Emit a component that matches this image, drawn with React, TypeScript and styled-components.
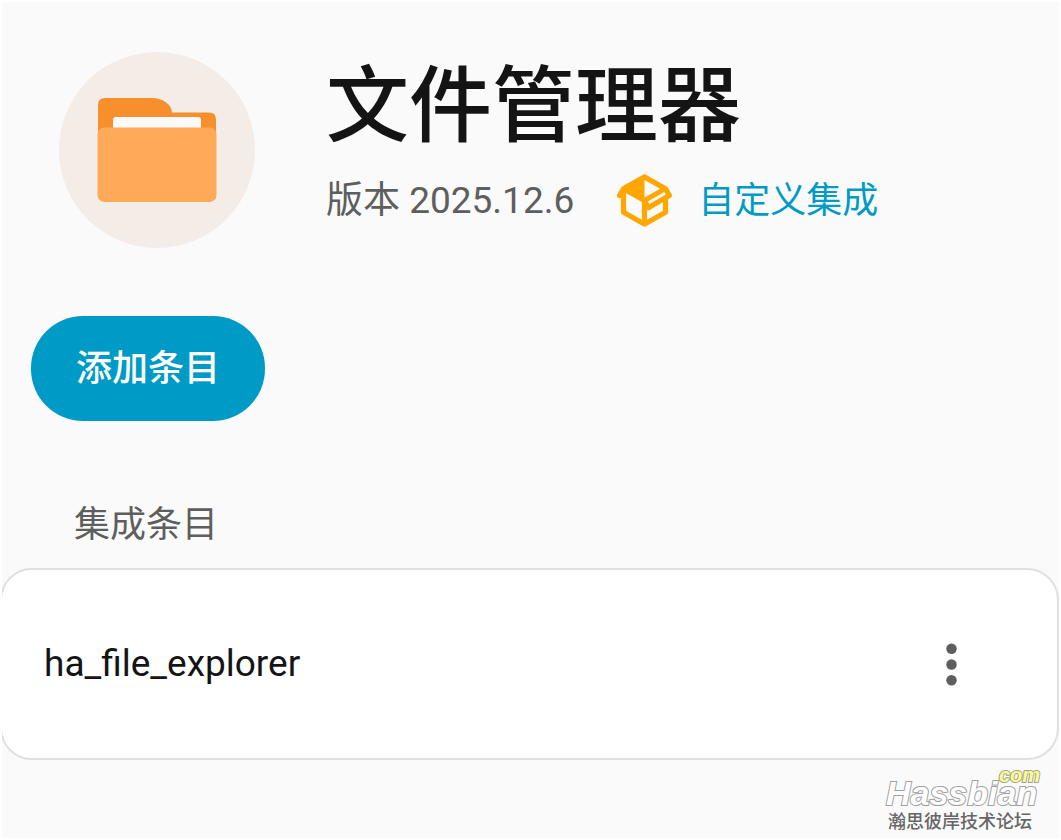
import React from "react";
import styled, { createGlobalStyle } from "styled-components";

const GlobalStyle = createGlobalStyle`
  * { box-sizing: border-box; }
  body {
    margin: 0;
    background: #ffffff;
    color: #141414;
    font-family: Roboto, "Noto Sans CJK SC", sans-serif;
    font-size: 36px;
    line-height: 48px;
  }
  h1, h2, p, ul { margin: 0; padding: 0; }
`;

const Page = styled.main`
  display: flex;
  flex-direction: column;
  min-height: calc(100vh - 4px);
  margin: 2px;
  background: #fafafa;
  overflow: hidden;
`;

const Header = styled.header`
  display: flex;
  align-items: flex-start;
  gap: 71px;
  padding: 50px 57px 0;
`;

const Logo = styled.svg`
  flex: none;
  width: 196px;
  height: 196px;
`;

const HeaderText = styled.div`
  display: flex;
  flex-direction: column;
  gap: 14px;
  padding-top: 7px;
`;

const Title = styled.h1`
  font-size: 83px;
  line-height: 96px;
  font-weight: 500;
`;

const Meta = styled.div`
  display: flex;
  align-items: center;
  gap: 39px;
`;

const Version = styled.p`
  color: #5e5e5e;
  font-size: 37px;
`;

const CustomLink = styled.a`
  display: flex;
  align-items: center;
  gap: 22px;
  color: #009ac7;
  text-decoration: none;
`;

const Icon = styled.svg<{ $color: string }>`
  flex: none;
  display: block;
  width: 63px;
  height: 63px;
  fill: ${({ $color }) => $color};
`;

const Actions = styled.div`
  padding: 68px 29px 0;
`;

const AddButton = styled.button`
  height: 105px;
  padding: 0 45px;
  border: 0;
  border-radius: 52px;
  background: #009ac7;
  color: #ffffff;
  font: inherit;
  font-weight: 500;
`;

const SectionTitle = styled.h2`
  padding: 80px 72px 19px;
  color: #5e5e5e;
  font-size: 36px;
  line-height: 48px;
  font-weight: 400;
`;

const EntryList = styled.ul`
  list-style: none;
  margin-left: -2px;
`;

const Entry = styled.li`
  display: flex;
  align-items: center;
  justify-content: space-between;
  height: 192px;
  padding: 0 74px 0 42px;
  border: 2px solid #e0e0e0;
  border-radius: 32px;
  background: #ffffff;
  font-size: 37px;
`;

const MenuButton = styled.button`
  padding: 0;
  border: 0;
  background: none;
`;

const Forum = styled.footer`
  display: flex;
  flex-direction: column;
  align-items: flex-end;
  padding: 4px 18px 0;
`;

const ForumLogo = styled.svg`
  width: 160px;
  height: 45px;
  overflow: visible;
  font-family: "Liberation Sans", Arial, sans-serif;
  font-weight: 700;
  font-style: italic;
  paint-order: stroke;
  stroke: #a0a0a0;
  stroke-width: 2px;
`;

const ForumName = styled.p`
  padding-right: 9px;
  color: #666666;
  font-size: 18px;
  line-height: 26px;
  font-weight: 500;
`;

export default function App() {
  return (
    <>
      <GlobalStyle />
      <Page>
        <Header>
          <Logo viewBox="0 0 196 196" aria-hidden="true">
            <circle cx="98" cy="98" r="98" fill="#f4ece7" />
            <path
              d="M39 90V53Q39 46 46 46H93C104 46 113 53 113 60.500H150Q157 60.500 157 67.500V90Z"
              fill="#f78f2d"
            />
            <path d="M54 80V68Q54 65 57 65H139Q142 65 142 68V80Z" fill="#fafafa" />
            <rect x="38.500" y="75.500" width="119" height="74.500" rx="7" fill="#ffa959" />
          </Logo>
          <HeaderText>
            <Title>文件管理器</Title>
            <Meta>
              <Version>版本 2025.12.6</Version>
              <CustomLink href="#custom">
                <Icon $color="#ffa600" viewBox="0 0 24 24" aria-hidden="true">
                  <path d="M2,10.96C1.5,10.68 1.35,10.07 1.63,9.59L3.13,7C3.24,6.8 3.41,6.66 3.6,6.58L11.43,2.18C11.59,2.06 11.79,2 12,2C12.21,2 12.41,2.06 12.57,2.18L20.47,6.62C20.66,6.72 20.82,6.88 20.91,7.08L22.36,9.6C22.64,10.08 22.47,10.69 22,10.96L21,11.54V16.5C21,16.88 20.79,17.21 20.47,17.38L12.57,21.82C12.41,21.94 12.21,22 12,22C11.79,22 11.59,21.94 11.43,21.82L3.53,17.38C3.21,17.21 3,16.88 3,16.5V10.96C2.7,11.13 2.32,11.14 2,10.96M12,4.15V4.15L12,10.85V10.85L17.96,7.5L12,4.15M5,15.91L11,19.29V12.58L5,9.21V15.91M19,15.91V12.69L14,15.59C13.67,15.77 13.3,15.76 13,15.6V19.29L19,15.91M13.85,13.36L20.13,9.73L19.55,8.72L13.27,12.35L13.85,13.36Z" />
                </Icon>
                自定义集成
              </CustomLink>
            </Meta>
          </HeaderText>
        </Header>
        <Actions>
          <AddButton type="button">添加条目</AddButton>
        </Actions>
        <SectionTitle>集成条目</SectionTitle>
        <EntryList>
          <Entry>
            <span>ha_file_explorer</span>
            <MenuButton type="button" aria-label="更多">
              <Icon $color="#5e5e5e" viewBox="0 0 24 24" aria-hidden="true">
                <circle cx="12" cy="6" r="2" />
                <circle cx="12" cy="12" r="2" />
                <circle cx="12" cy="18" r="2" />
              </Icon>
            </MenuButton>
          </Entry>
        </EntryList>
        <Forum>
          <ForumLogo viewBox="0 0 160 45">
            <text x="5" y="41" fontSize="34" fill="#fdfdfd">Hassbian</text>
            <text x="118" y="18" fontSize="20" fill="#ffff80">com</text>
          </ForumLogo>
          <ForumName>瀚思彼岸技术论坛</ForumName>
        </Forum>
      </Page>
    </>
  );
}
